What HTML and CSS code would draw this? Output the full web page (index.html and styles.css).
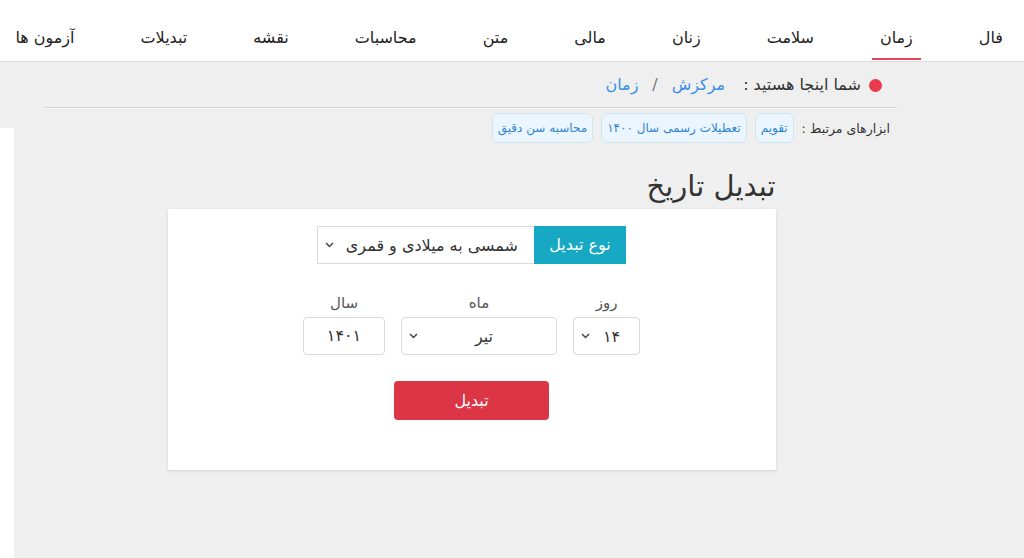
FILE: index.html
```html
<!DOCTYPE html>
<html lang="fa" dir="rtl">
<head>
<meta charset="utf-8">
<link rel="stylesheet" href="styles.css">
</head>
<body>
<nav class="topnav">
  <a class="nav-item">فال</a>
  <a class="nav-item active">زمان</a>
  <a class="nav-item">سلامت</a>
  <a class="nav-item">زنان</a>
  <a class="nav-item">مالی</a>
  <a class="nav-item">متن</a>
  <a class="nav-item">محاسبات</a>
  <a class="nav-item">نقشه</a>
  <a class="nav-item">تبدیلات</a>
  <a class="nav-item">آزمون ها</a>
</nav>
<div class="page">
  <main class="main">
    <div class="breadcrumb">
      <span class="dot"></span>
      <span class="bc-label">شما اینجا هستید :</span>
      <a class="bc-link">مرکزش</a>
      <span class="bc-sep">/</span>
      <a class="bc-link">زمان</a>
    </div>
    <div class="related">
      <span class="related-label">ابزارهای مرتبط :</span>
      <a class="chip">تقویم</a>
      <a class="chip">تعطیلات رسمی سال ۱۴۰۰</a>
      <a class="chip">محاسبه سن دقیق</a>
    </div>
    <section class="tool">
      <h1 class="title">تبدیل تاریخ</h1>
      <div class="card">
        <div class="input-group">
          <span class="addon">نوع تبدیل</span>
          <div class="select select-type">
            <span class="select-text">شمسی به میلادی و قمری</span>
            <svg class="chev" width="9" height="6" viewBox="0 0 9 6"><path d="M1 1l3.5 3.5L8 1" fill="none" stroke="#444" stroke-width="1.5"/></svg>
          </div>
        </div>
        <div class="date-row">
          <div class="field">
            <label class="field-label">روز</label>
            <div class="select select-day">
              <span class="select-text center">۱۴</span>
              <svg class="chev" width="9" height="6" viewBox="0 0 9 6"><path d="M1 1l3.5 3.5L8 1" fill="none" stroke="#444" stroke-width="1.5"/></svg>
            </div>
          </div>
          <div class="field">
            <label class="field-label">ماه</label>
            <div class="select select-month">
              <span class="select-text center">تیر</span>
              <svg class="chev" width="9" height="6" viewBox="0 0 9 6"><path d="M1 1l3.5 3.5L8 1" fill="none" stroke="#444" stroke-width="1.5"/></svg>
            </div>
          </div>
          <div class="field">
            <label class="field-label">سال</label>
            <div class="input-year">۱۴۰۱</div>
          </div>
        </div>
        <div class="btn-row">
          <button class="btn-convert">تبدیل</button>
        </div>
      </div>
    </section>
  </main>
  <aside class="sidebar"></aside>
</div>
</body>
</html>
```

FILE: styles.css
```css
* { box-sizing: border-box; }
html, body {
  margin: 0;
  padding: 0;
  height: 100%;
  overflow: hidden;
}
body {
  direction: rtl;
  font-family: "DejaVu Sans", "Noto Sans", sans-serif;
  background: #efefef;
  color: #333;
}
a { text-decoration: none; }

.topnav {
  display: flex;
  flex-direction: row;
  height: 62px;
  background: #fff;
  border-bottom: 1px solid #dcdcdc;
  padding-right: 13px;
  overflow: hidden;
  white-space: nowrap;
}
.nav-item {
  position: relative;
  flex: none;
  padding: 16px 33px 0 33px;
  font-size: 16px;
  line-height: 44px;
  color: #222;
}
.nav-item:first-child { padding-right: 8px; }
.nav-item:last-child { padding-left: 0; }
.nav-item.active::after {
  content: "";
  position: absolute;
  right: 25px;
  left: 25px;
  bottom: 1px;
  height: 2px;
  background: #e2475c;
}

.page {
  display: flex;
  flex-direction: row;
  height: calc(100% - 62px);
}
.main {
  flex: 1;
  padding: 0 126px 0 31px;
}
.sidebar {
  flex: none;
  width: 14px;
  margin-top: 66px;
  background: #fff;
}

.breadcrumb {
  display: flex;
  align-items: center;
  height: 46px;
  padding-right: 16px;
  border-bottom: 1px solid #d6d6d6;
  box-shadow: 0 1px 0 #f7f7f7;
  font-size: 16px;
}
.dot {
  width: 13px;
  height: 13px;
  border-radius: 50%;
  background: #ea3a4e;
  margin-left: 8px;
  margin-top: 2px;
}
.bc-label { color: #333; margin-left: 18px; }
.bc-link { color: #3b8fe6; }
.bc-sep { color: #777; margin: 0 14px; }

.related {
  display: flex;
  align-items: center;
  gap: 8px;
  padding: 5px 8px 0 0;
}
.related-label { color: #333; font-size: 12.5px; }
.chip {
  display: inline-block;
  padding: 0 5px;
  height: 30px;
  line-height: 28px;
  border: 1px solid #cfe6ee;
  border-radius: 6px;
  background: #eaf5fd;
  color: #2f86d6;
  font-size: 12px;
}

.tool {
  width: 608px;
  margin: 0 auto;
}
.title {
  margin: 20px 0 0;
  font-size: 29px;
  font-weight: normal;
  line-height: 46px;
  color: #333;
  height: 46px;
}
.card {
  margin-top: 0;
  background: #fff;
  box-shadow: 0 1px 3px rgba(0,0,0,0.12);
  padding: 17px 0 50px;
}
.input-group {
  display: flex;
  justify-content: center;
}
.addon {
  width: 92px;
  height: 38px;
  line-height: 38px;
  background: #17a9c4;
  color: #fff;
  text-align: center;
  font-size: 16px;
}
.select {
  display: flex;
  align-items: center;
  height: 38px;
  border: 1px solid #dadada;
  background: #fff;
  color: #333;
  font-size: 16px;
}
.select-type {
  width: 217px;
  padding: 0 16px 0 7px;
  border-right: none;
}
.select-type .select-text { flex: 1; }
.chev { flex: none; }
.select-day, .select-month {
  border-radius: 4px;
  padding: 0 6px 0 7px;
}
.select-day { width: 67px; }
.select-month { width: 156px; }
.select-text.center { flex: 1; text-align: center; }
.date-row {
  display: flex;
  justify-content: center;
  gap: 16px;
  margin-top: 28px;
}
.field {
  display: flex;
  flex-direction: column;
  align-items: center;
}
.field-label {
  font-size: 15px;
  color: #555;
  line-height: 22px;
  margin-bottom: 3px;
}
.input-year {
  width: 82px;
  height: 38px;
  line-height: 36px;
  border: 1px solid #dadada;
  border-radius: 4px;
  text-align: center;
  font-size: 16px;
  color: #333;
}
.btn-row {
  display: flex;
  justify-content: center;
  margin-top: 26px;
}
.btn-convert {
  width: 155px;
  height: 39px;
  border: none;
  border-radius: 4px;
  background: #dc3545;
  color: #fff;
  font-family: inherit;
  font-size: 16px;
}
```
